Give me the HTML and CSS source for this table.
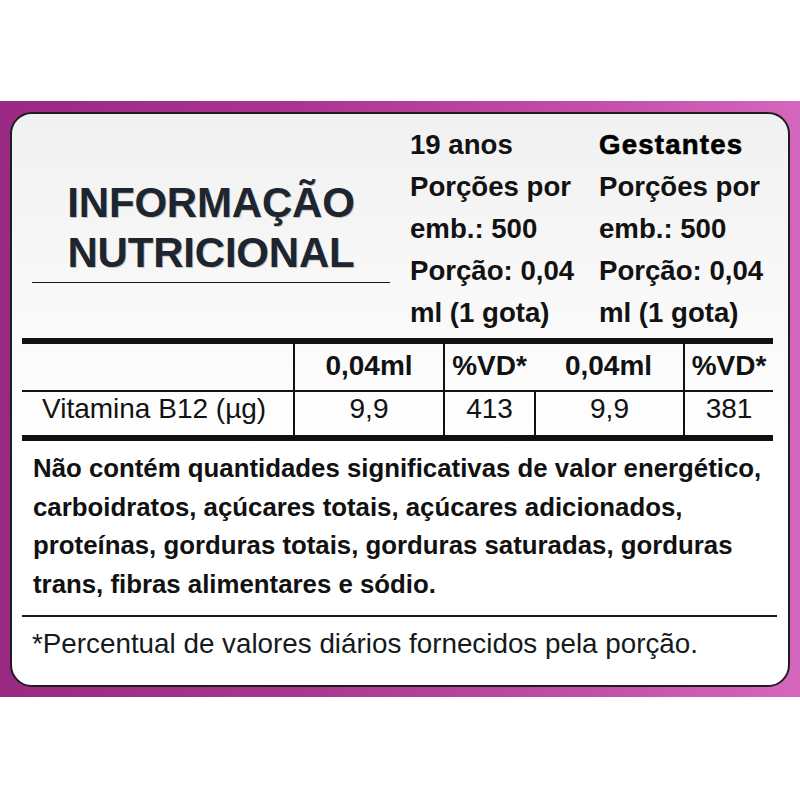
FILE: index.html
```html
<!DOCTYPE html>
<html lang="pt-BR">
<head>
<meta charset="utf-8">
<title>Informação Nutricional</title>
<link rel="stylesheet" href="styles.css">
</head>
<body>
<div class="band">
  <div class="panel">
    <div class="head">
      <div class="title-wrap">
        <h1 class="title">INFORMAÇÃO<br>NUTRICIONAL</h1>
      </div>
      <div class="group group-a">
        <div>19 anos</div>
        <div>Porções por</div>
        <div>emb.: 500</div>
        <div>Porção: 0,04</div>
        <div>ml (1 gota)</div>
      </div>
      <div class="group group-b">
        <div class="gest">Gestantes</div>
        <div>Porções por</div>
        <div>emb.: 500</div>
        <div>Porção: 0,04</div>
        <div>ml (1 gota)</div>
      </div>
    </div>

    <div class="facts">
      <div class="hc"></div>
      <div class="hc bl">0,04ml</div>
      <div class="hc bl">%VD*</div>
      <div class="hc">0,04ml</div>
      <div class="hc bl">%VD*</div>

      <div class="dc name">Vitamina B12 (µg)</div>
      <div class="dc bl">9,9</div>
      <div class="dc bl">413</div>
      <div class="dc bl">9,9</div>
      <div class="dc bl">381</div>
    </div>

    <p class="note">Não contém quantidades significativas de valor energético, carboidratos, açúcares totais, açúcares adicionados, proteínas, gorduras totais, gorduras saturadas, gorduras trans, fibras alimentares e sódio.</p>

    <div class="rule"></div>
    <p class="foot">*Percentual de valores diários fornecidos pela porção.</p>
  </div>
</div>
</body>
</html>
```

FILE: styles.css
```css
* { box-sizing: border-box; }

html, body {
  margin: 0;
  padding: 0;
  background: #ffffff;
}

body {
  width: 800px;
  height: 800px;
  font-family: "Liberation Sans", Arial, sans-serif;
  color: #121212;
}

.band {
  margin-top: 101px;
  height: 596px;
  padding: 11px 10px 10px 10px;
  background: linear-gradient(90deg, #9a2983 0%, #a9348f 35%, #c44fa8 75%, #d467bd 100%);
}

.panel {
  height: 100%;
  border: 2px solid #1d1d1d;
  border-radius: 22px;
  background: linear-gradient(180deg, #f1f1f1 0%, #f8f8f8 30%, #ffffff 60%);
  overflow: hidden;
}

/* ---------- header ---------- */
.head {
  display: flex;
  padding-top: 10px;
  height: 224px;
}

.title-wrap {
  width: 358px;
  margin-left: 20px;
  padding-top: 53.5px;
  align-self: flex-start;
  border-bottom: 1.5px solid #1a1a1a;
  padding-bottom: 4px;
}

.title {
  margin: 0;
  text-align: center;
  font-size: 42px;
  line-height: 50px;
  font-weight: bold;
  color: #1d2630;
  text-shadow: 1px 1px 0 rgba(60, 40, 0, 0.25);
  letter-spacing: -0.2px;
}

.group {
  font-size: 27.6px;
  font-weight: bold;
  line-height: 42px;
  white-space: nowrap;
}

.group-a {
  margin-left: 20px;
  width: 189px;
}

.group-b {
  flex: 1;
}

.gest {
  letter-spacing: 1.2px;
  color: #000;
  -webkit-text-stroke: 0.6px #000;
}

/* ---------- table ---------- */
.facts {
  display: grid;
  grid-template-columns: 271px 150px 91px 149px 90px;
  width: 751px;
  margin-left: 10px;
  border-top: 6px solid #111;
  border-bottom: 6px solid #111;
  font-size: 28px;
}

.hc {
  height: 48px;
  border-bottom: 2px solid #111;
  text-align: center;
  font-weight: bold;
  line-height: 44px;
}

.dc {
  height: 43px;
  text-align: center;
  line-height: 34px;
}

.bl {
  border-left: 2px solid #111;
}

.dc.name {
  text-align: left;
  padding-left: 20px;
  white-space: nowrap;
}

/* ---------- notes ---------- */
.note {
  margin: 8px 0 0 21px;
  width: 740px;
  font-size: 25.8px;
  font-weight: bold;
  line-height: 38.5px;
  color: #111;
}

.rule {
  margin: 12px 0 0 10px;
  width: 755px;
  height: 2px;
  background: #1a1a1a;
}

.foot {
  margin: 9px 0 0 20px;
  font-size: 27.8px;
  line-height: 36px;
  color: #141a20;
  white-space: nowrap;
}
```
